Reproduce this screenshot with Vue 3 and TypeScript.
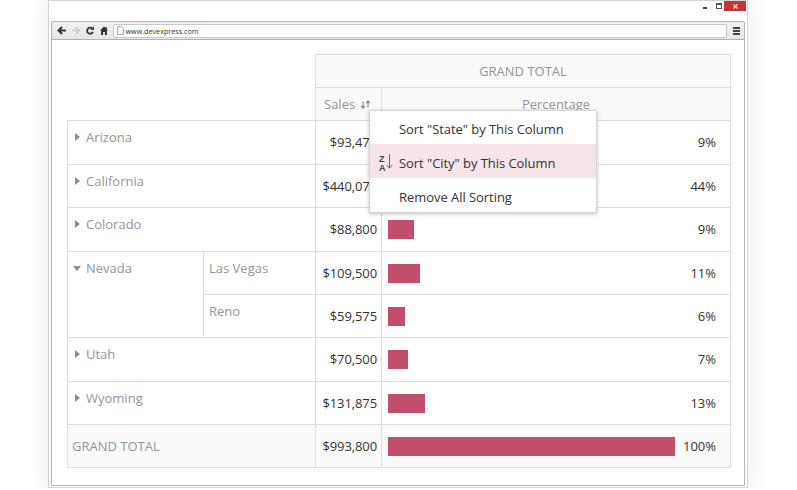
<script setup lang="ts">
interface Row {
  state: string
  city?: string
  open?: boolean
  collapsed?: boolean
  sales: string
  pct: number
}

const rows: Row[] = [
  { state: 'Arizona', collapsed: true, sales: '$93,475', pct: 9 },
  { state: 'California', collapsed: true, sales: '$440,075', pct: 44 },
  { state: 'Colorado', collapsed: true, sales: '$88,800', pct: 9 },
  { state: 'Nevada', open: true, city: 'Las Vegas', sales: '$109,500', pct: 11 },
  { state: '', city: 'Reno', sales: '$59,575', pct: 6 },
  { state: 'Utah', collapsed: true, sales: '$70,500', pct: 7 },
  { state: 'Wyoming', collapsed: true, sales: '$131,875', pct: 13 },
]

const menu = [
  { label: 'Sort "State" by This Column', active: false },
  { label: 'Sort "City" by This Column', active: true },
  { label: 'Remove All Sorting', active: false },
]

const barWidth = (pct: number) => `${pct * 2.87}px`
</script>

<template>
  <div class="window">
    <div class="titlebar">
      <span class="min"></span>
      <span class="max"></span>
      <span class="close">
        <svg width="7" height="7" viewBox="0 0 7 7"><path d="M1.500 1.500l4 4M5.500 1.500l-4 4" stroke="#f4dada" stroke-width="1.300" /></svg>
      </span>
    </div>
    <div class="browser">
      <div class="toolbar">
        <svg class="tool" width="9" height="9" viewBox="0 0 9 9"><path d="M9 4.500H2.500M5 1L1.500 4.500 5 8" fill="none" stroke="#333" stroke-width="2" /></svg>
        <svg class="tool" width="9" height="9" viewBox="0 0 9 9"><path d="M0 4.500h6.500M4 1.200l3.300 3.300L4 7.800" fill="none" stroke="#c8c8c8" stroke-width="1.500" /></svg>
        <svg class="tool" width="8" height="9" viewBox="0 0 8 9"><path d="M6.600 3A3 3 0 1 0 6.900 5.800" fill="none" stroke="#333" stroke-width="1.800" /><path d="M4.500 3.800H8V.2z" fill="#333" /></svg>
        <svg class="tool home" width="8" height="9" viewBox="0 0 8 9"><path d="M4 .5L0 4.600h1.100V9h2V6h1.800v3h2V4.600H8L6.800 3.300V1H5.600v1.100z" fill="#333" /></svg>
        <div class="address">
          <svg width="7" height="9" viewBox="0 0 7 9"><path d="M.5.500h4l2 2v6h-6z" fill="#fff" stroke="#a9a9a9" /></svg>
          <span>www.devexpress.com</span>
        </div>
        <div class="burger"><i></i><i></i><i></i></div>
      </div>
      <div class="page">
        <div class="pivot">
          <div class="cell corner"></div>
          <div class="cell head total-head">GRAND TOTAL</div>
          <div class="cell head sales-head">
            <span>Sales</span>
            <svg width="11" height="9" viewBox="0 0 11 9"><path d="M3 1.500V8M1 5.800L3 8.200l2-2.400M8 7.500V1M6 3.200L8 .8l2 2.400" fill="none" stroke="#858585" stroke-width="1.100" /></svg>
          </div>
          <div class="cell head pct-head">Percentage</div>

          <template v-for="r in rows" :key="r.sales">
            <div v-if="r.state" class="cell state" :class="{ wide: r.collapsed, tall: r.open }">
              <span class="tri" :class="r.open ? 'down' : 'right'"></span>{{ r.state }}
            </div>
            <div v-if="r.city" class="cell city">{{ r.city }}</div>
            <div class="cell value">{{ r.sales }}</div>
            <div class="cell pct">
              <span class="bar" :style="{ width: barWidth(r.pct) }"></span>
              <span>{{ r.pct }}%</span>
            </div>
          </template>

          <div class="cell wide label-total">GRAND TOTAL</div>
          <div class="cell value shaded">$993,800</div>
          <div class="cell pct shaded">
            <span class="bar" :style="{ width: barWidth(100) }"></span>
            <span>100%</span>
          </div>

          <div class="menu">
            <div v-for="m in menu" :key="m.label" class="item" :class="{ active: m.active }">
              <span v-if="m.active" class="az">
                <span class="letters"><b>Z</b><b>A</b></span>
                <svg width="7" height="15" viewBox="0 0 7 15"><path d="M3.500 0v14M.8 11l2.700 3.200L6.200 11" fill="none" stroke="#666" stroke-width="1" /></svg>
              </span>
              {{ m.label }}
            </div>
          </div>
        </div>
      </div>
    </div>
  </div>
</template>

<style scoped>
.window {
  box-sizing: border-box;
  width: 700px;
  height: 488px;
  margin-left: 48px;
  padding: 0 2px 2px;
  background: #fff;
  border: 1px solid #d4d4d4;
  box-shadow: 0 0 22px rgba(0, 0, 0, 0.09);
  font-family: "Open Sans", "Noto Sans", sans-serif;
  font-size: 13px;
}
.titlebar {
  height: 20px;
  display: flex;
  justify-content: flex-end;
  align-items: flex-start;
}
.min {
  width: 4px;
  height: 2px;
  margin: 6px 9px 0 0;
  background: #444;
}
.max {
  box-sizing: border-box;
  width: 6px;
  height: 6px;
  margin: 2px 2px 0 0;
  border: 1px solid #555;
  border-top-width: 2px;
}
.close {
  width: 22px;
  height: 10px;
  margin-right: -1px;
  background: #c0343a;
  display: flex;
  align-items: center;
  justify-content: center;
}
.browser {
  box-sizing: border-box;
  height: 465px;
  border: 1px solid #b4b4b4;
  border-radius: 2px 2px 0 0;
}
.toolbar {
  box-sizing: border-box;
  height: 18px;
  padding: 2px 2px 2px 5px;
  display: flex;
  align-items: center;
  background: linear-gradient(#f1f1f1, #e6e6e6);
  border-bottom: 1px solid #b0b0b0;
}
.tool {
  flex: none;
  margin-right: 5.500px;
}
.tool.home {
  margin-right: 5px;
}
.address {
  flex: 1;
  height: 12px;
  margin: 0 6px 0 0;
  padding-left: 3px;
  display: flex;
  align-items: center;
  gap: 2px;
  background: #fff;
  border: 1px solid #c9c9c9;
  border-radius: 2px;
  font-size: 7.200px;
  color: #333;
}
.burger {
  width: 7px;
  margin-right: 2px;
  display: flex;
  flex-direction: column;
  gap: 1px;
}
.burger i {
  height: 2px;
  background: #444;
}
.page {
  padding: 14px 0 0 15px;
}
.pivot {
  position: relative;
  display: grid;
  width: 664px;
  grid-template-columns: 137px 112px 66px 349px;
  grid-template-rows: 34px 33px 44px 43px 44px 43px 43px 44px 43px 43px;
}
.cell {
  box-sizing: border-box;
  border-right: 1px solid #ddd;
  border-bottom: 1px solid #ddd;
  min-width: 0;
}
.corner {
  grid-column: 1 / span 2;
  grid-row: 1 / span 2;
}
.head {
  background: #fafafa;
  color: #959595;
  display: flex;
  align-items: center;
  justify-content: center;
}
.total-head {
  grid-column: 3 / span 2;
  grid-row: 1;
  border-top: 1px solid #ddd;
  border-left: 1px solid #ddd;
  margin-left: -1px;
}
.sales-head {
  grid-column: 3;
  grid-row: 2;
  gap: 5px;
  padding-left: 8px;
  justify-content: flex-start;
  border-left: 1px solid #ddd;
  margin-left: -1px;
}
.pct-head {
  grid-column: 4;
  grid-row: 2;
}
.state {
  padding: 6px 0 0 7px;
  color: #959595;
  border-left: 1px solid #ddd;
  display: flex;
  align-items: flex-start;
  line-height: 20px;
}
.wide {
  grid-column: span 2;
}
.tall {
  grid-row: span 2;
}
.tri {
  flex: none;
  width: 0;
  height: 0;
}
.tri.right {
  margin: 6px 6px 0 0;
  border-top: 4px solid transparent;
  border-bottom: 4px solid transparent;
  border-left: 5px solid #8f8f8f;
}
.tri.down {
  margin: 8px 5px 0 -2px;
  border-left: 4px solid transparent;
  border-right: 4px solid transparent;
  border-top: 5px solid #8f8f8f;
}
.city {
  padding: 6px 0 0 5px;
  color: #959595;
  line-height: 20px;
}
.value {
  color: #333;
  display: flex;
  align-items: center;
  justify-content: flex-end;
  padding: 0 4px 1px 0;
  letter-spacing: -0.1px;
}
.pct {
  color: #333;
  display: flex;
  align-items: center;
  justify-content: space-between;
  padding: 0 14px 0 6px;
}
.pct span:last-child {
  padding-bottom: 1px;
}
.bar {
  height: 19px;
  background: #c14e6d;
}
.label-total {
  padding-left: 4px;
  background: #fafafa;
  color: #959595;
  border-left: 1px solid #ddd;
  display: flex;
  align-items: center;
}
.shaded {
  background: #fafafa;
}
.menu {
  position: absolute;
  left: 302px;
  top: 56px;
  box-sizing: border-box;
  width: 228px;
  height: 103px;
  background: #fff;
  border: 1px solid #d5d5d5;
  box-shadow: 0 1px 4px rgba(0, 0, 0, 0.25);
  color: #333;
  letter-spacing: -0.05px;
}
.item {
  position: relative;
  box-sizing: border-box;
  height: 34px;
  padding: 4px 0 0 29px;
  display: flex;
  align-items: center;
}
.item:first-child {
  margin-top: -1px;
}
.item.active {
  background: #f6e4e9;
}
.az {
  position: absolute;
  left: 9px;
  top: 10px;
  display: flex;
  align-items: flex-start;
  gap: 1px;
}
.letters {
  display: flex;
  flex-direction: column;
  font-family: "Liberation Sans", sans-serif;
  font-size: 9px;
  line-height: 8.500px;
  padding-top: 1px;
  color: #444;
}
</style>

<style>
html,
body {
  background: #fff;
}
</style>
